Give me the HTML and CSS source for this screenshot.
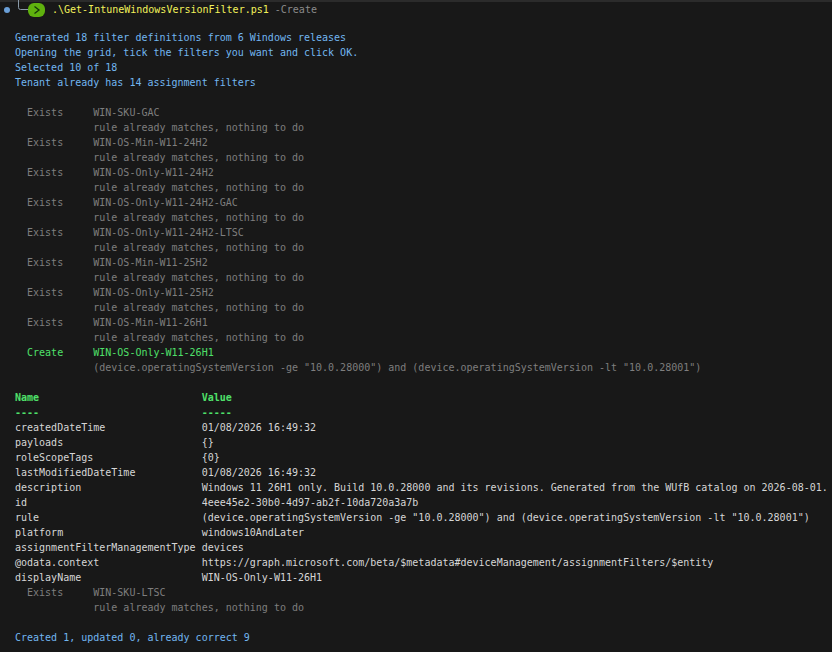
FILE: index.html
```html
<!DOCTYPE html>
<html lang="en">
<head>
  <meta charset="UTF-8" />
  <title>Terminal</title>
  <link rel="stylesheet" href="styles.css">
</head>
<body>
  <div class="top-rule"></div>
  <div class="prompt">
    <span class="dot"></span>
    <svg class="corner" width="20" height="14" viewBox="0 0 20 14"><path d="M4.5 0V8.5Q4.5 10.5 6.5 10.5H20" fill="none" stroke="#8a9aa8" stroke-width="1"/></svg>
    <span class="badge"><svg width="8" height="10" viewBox="0 0 8 10"><path d="M1.5 1.5L6 5L1.5 8.5" fill="none" stroke="#14340a" stroke-width="1.3"/></svg></span>
    <span class="cmd">.\Get-IntuneWindowsVersionFilter.ps1</span>&nbsp;<span class="arg">-Create</span>
  </div>
  <pre class="term">

<span class="cyan">Generated 18 filter definitions from 6 Windows releases
Opening the grid, tick the filters you want and click OK.
Selected 10 of 18
Tenant already has 14 assignment filters</span>

<span class="grey">  Exists     WIN-SKU-GAC
             rule already matches, nothing to do
  Exists     WIN-OS-Min-W11-24H2
             rule already matches, nothing to do
  Exists     WIN-OS-Only-W11-24H2
             rule already matches, nothing to do
  Exists     WIN-OS-Only-W11-24H2-GAC
             rule already matches, nothing to do
  Exists     WIN-OS-Only-W11-24H2-LTSC
             rule already matches, nothing to do
  Exists     WIN-OS-Min-W11-25H2
             rule already matches, nothing to do
  Exists     WIN-OS-Only-W11-25H2
             rule already matches, nothing to do
  Exists     WIN-OS-Min-W11-26H1
             rule already matches, nothing to do</span>
<span class="green">  Create     WIN-OS-Only-W11-26H1</span>
<span class="grey">             (device.operatingSystemVersion -ge "10.0.28000") and (device.operatingSystemVersion -lt "10.0.28001")</span>

<span class="head">Name                           Value
----                           -----</span>
createdDateTime                01/08/2026 16:49:32
payloads                       {}
roleScopeTags                  {0}
lastModifiedDateTime           01/08/2026 16:49:32
description                    Windows 11 26H1 only. Build 10.0.28000 and its revisions. Generated from the WUfB catalog on 2026-08-01.
id                             4eee45e2-30b0-4d97-ab2f-10da720a3a7b
rule                           (device.operatingSystemVersion -ge "10.0.28000") and (device.operatingSystemVersion -lt "10.0.28001")
platform                       windows10AndLater
assignmentFilterManagementType devices
@odata.context                 https://graph.microsoft.com/beta/$metadata#deviceManagement/assignmentFilters/$entity
displayName                    WIN-OS-Only-W11-26H1
<span class="grey">  Exists     WIN-SKU-LTSC
             rule already matches, nothing to do</span>

<span class="cyan">Created 1, updated 0, already correct 9</span></pre>
</body>
</html>
```

FILE: styles.css
```css
html, body {
  margin: 0;
  height: 100%;
  overflow: hidden;
}

body {
  background-color: #181818;
  color: #d6d6d6;
  font-family: "DejaVu Sans Mono", monospace;
  font-size: 10px;
  line-height: 15px;
}

.top-rule {
  height: 2px;
  background-color: #2b2b2b;
}

.prompt {
  display: flex;
  align-items: center;
  height: 15px;
  padding-left: 4px;
  white-space: pre;
}

.dot {
  width: 6px;
  height: 6px;
  border-radius: 50%;
  background-color: #6a9fd8;
}

.corner {
  margin-left: 4px;
  margin-top: -8px;
  margin-right: -6px;
}

.badge {
  display: flex;
  align-items: center;
  justify-content: center;
  width: 17px;
  height: 14px;
  border-radius: 6px;
  background-color: #5fb10e;
  margin-right: 7px;
}

.cmd {
  color: #f2f25a;
}

.arg {
  color: #8a8a8a;
}

.term {
  margin: -2px 0 0 15px;
  font: inherit;
  line-height: 15px;
}

.cyan {
  color: #72b6f0;
}

.grey {
  color: #7e7e7e;
}

.green {
  color: #4fe06a;
}

.head {
  color: #4fe06a;
  font-weight: bold;
}
```
